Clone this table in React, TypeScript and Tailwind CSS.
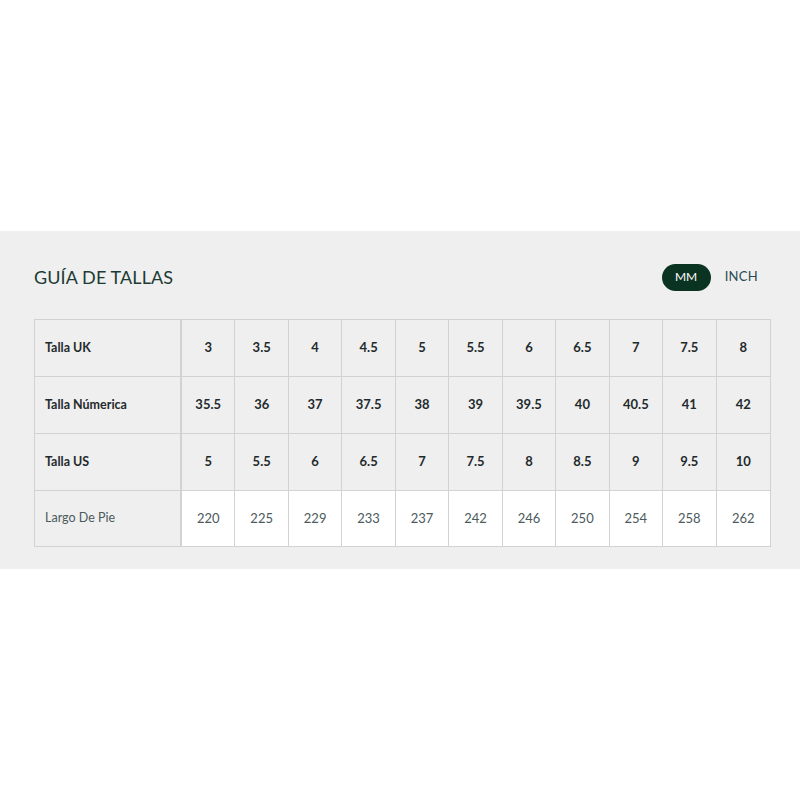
import React from "react";

const rows: { label: string; values: string[]; bold: boolean }[] = [
  { label: "Talla UK", values: ["3", "3.5", "4", "4.5", "5", "5.5", "6", "6.5", "7", "7.5", "8"], bold: true },
  { label: "Talla Númerica", values: ["35.5", "36", "37", "37.5", "38", "39", "39.5", "40", "40.5", "41", "42"], bold: true },
  { label: "Talla US", values: ["5", "5.5", "6", "6.5", "7", "7.5", "8", "8.5", "9", "9.5", "10"], bold: true },
  { label: "Largo De Pie", values: ["220", "225", "229", "233", "237", "242", "246", "250", "254", "258", "262"], bold: false },
];

export default function App() {
  return (
    <div className="w-[800px] h-[800px] bg-white flex flex-col" style={{ fontFamily: "Lato, 'Open Sans', sans-serif" }}>
      <div className="h-[231px]" />
      <div className="h-[338px] bg-[#efefef] px-[34px] pt-[30px]">
        <div className="flex items-center justify-between h-[32px] pr-[8px]">
          <h2 className="text-[18px] text-[#1d3a33] tracking-[0.1px]">GUÍA DE TALLAS</h2>
          <div className="flex items-center gap-[14px]">
            <div className="w-[49px] h-[27px] rounded-full bg-[#0b3322] text-white text-[12px] flex items-center justify-center">MM</div>
            <div className="text-[13px] text-[#2a4a52] tracking-[0.3px]">INCH</div>
          </div>
        </div>
        <div className="mt-[26px] w-[737px] border border-[#d2d2d2] grid grid-cols-[147px_repeat(11,1fr)]">
          {rows.map((row, ri) => (
            <React.Fragment key={row.label}>
              <div
                className={`flex items-center pl-[10px] border-r-2 border-[#d2d2d2] text-[12.5px] ${ri < 3 ? "border-b h-[57px]" : "h-[55px]"} ${row.bold ? "font-bold text-[#1f2a2c]" : "text-[#4b5a5c]"}`}
              >
                {row.label}
              </div>
              {row.values.map((v, vi) => (
                <div
                  key={vi}
                  className={`flex items-center justify-center border-[#d2d2d2] text-[13px] ${vi < 10 ? "border-r" : ""} ${ri < 3 ? "border-b h-[57px]" : "h-[55px]"} ${row.bold ? "font-bold text-[#1f2a2c]" : "bg-white text-[#4b5a5c]"}`}
                >
                  {v}
                </div>
              ))}
            </React.Fragment>
          ))}
        </div>
      </div>
    </div>
  );
}
